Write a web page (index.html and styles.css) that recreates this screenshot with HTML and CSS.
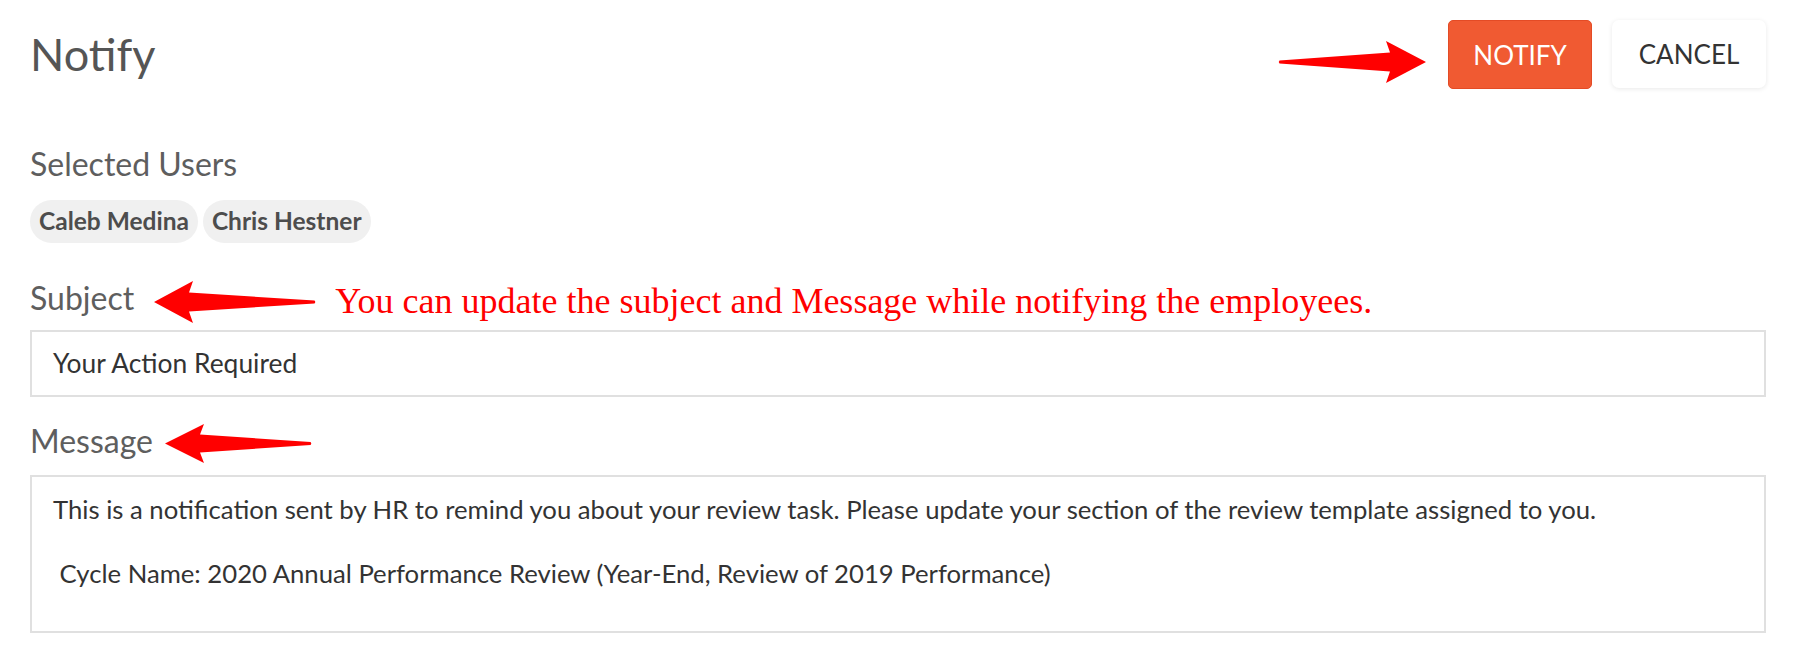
FILE: index.html
```html
<!DOCTYPE html>
<html lang="en">
<head>
<meta charset="utf-8">
<title>Notify</title>
<link rel="stylesheet" href="styles.css">
</head>
<body>
<div class="page">
  <header class="header">
    <h1 class="title">Notify</h1>
    <div class="spacer"></div>
    <svg class="arrow arrow-right" width="148" height="42" viewBox="0 0 148 42" aria-hidden="true">
      <path d="M148 21 L108 0 L112 11.5 L1.5 19.5 Q0 21 1.5 22.5 L112 30.5 L108 42 Z" fill="#ff0000"/>
    </svg>
    <button class="btn btn-primary">NOTIFY</button>
    <button class="btn btn-cancel">CANCEL</button>
  </header>

  <section class="users">
    <div class="label label-users">Selected Users</div>
    <div class="chips">
      <span class="chip">Caleb Medina</span>
      <span class="chip">Chris Hestner</span>
    </div>
  </section>

  <section class="field">
    <div class="label-row row-subject">
      <div class="label">Subject</div>
      <svg class="arrow arrow-subject" width="162" height="42" viewBox="0 0 162 42" aria-hidden="true">
        <path d="M0 21 L39 0 L35 11.5 L160.5 19.5 Q162 21 160.5 22.5 L35 30.5 L39 42 Z" fill="#ff0000"/>
      </svg>
      <div class="note">You can update the subject and Message while notifying the employees.</div>
    </div>
    <div class="input">Your Action Required</div>
  </section>

  <section class="field">
    <div class="label-row row-message">
      <div class="label">Message</div>
      <svg class="arrow arrow-message" width="147" height="39" viewBox="0 0 147 39" aria-hidden="true">
        <path d="M0 19.5 L39 0 L35 10.5 L145.5 18 Q147 19.5 145.5 21 L35 28.5 L39 39 Z" fill="#ff0000"/>
      </svg>
    </div>
    <div class="textarea">This is a notification sent by HR to remind you about your review task. Please update your section of the review template assigned to you.

 Cycle Name: 2020 Annual Performance Review (Year-End, Review of 2019 Performance)</div>
  </section>
</div>
</body>
</html>
```
FILE: styles.css
```css
html, body {
  margin: 0;
  padding: 0;
  background: #ffffff;
}

body {
  font-family: "Lato", "Open Sans", "Liberation Sans", sans-serif;
  color: #333333;
}

.page {
  padding: 20px 30px 0 30px;
}

.header {
  display: flex;
  align-items: center;
  height: 69px;
}

.title {
  margin: 0 0 2px 0;
  font-size: 45px;
  font-weight: 400;
  color: #555555;
  line-height: normal;
}

.spacer {
  flex: 1;
}

.arrow {
  display: block;
  flex: none;
}

.arrow-right {
  align-self: flex-start;
  margin-top: 21px;
  margin-right: 22px;
}

.btn {
  font-family: "Lato", "Open Sans", sans-serif;
  font-size: 26px;
  font-weight: 400;
  height: 69px;
  border-radius: 5px;
  cursor: pointer;
  box-sizing: border-box;
}

.btn-primary {
  width: 144px;
  background: #f05a32;
  border: 1px solid #e44b25;
  color: #ffffff;
}

.btn-cancel {
  width: 154px;
  height: 68px;
  align-self: flex-start;
  margin-left: 20px;
  background: #ffffff;
  border: none;
  color: #333333;
  border-radius: 7px;
  box-shadow: 0 1px 5px rgba(0, 0, 0, 0.09);
}

.label {
  font-size: 32px;
  font-weight: 400;
  color: #5e5e5e;
  line-height: normal;
}

.users {
  margin-top: 55px;
}

.chips {
  display: flex;
  gap: 5px;
  margin-top: 17px;
}

.chip {
  display: inline-block;
  background: #f0f0f0;
  border-radius: 22px;
  padding: 6px 9px 7px 9px;
  font-size: 24.5px;
  font-weight: 700;
  color: #4d4d4d;
  line-height: 30px;
}

.label-row {
  display: flex;
  align-items: flex-start;
}

.row-subject {
  margin-top: 35px;
  margin-bottom: 7px;
}

.arrow-subject {
  margin-top: 3px;
  margin-left: 20px;
}

.note {
  margin-top: 1.5px;
  margin-left: 19px;
  font-family: "Liberation Serif", "Times New Roman", serif;
  font-size: 36px;
  color: #ff0000;
  line-height: normal;
  white-space: nowrap;
}

.input {
  border: 2px solid #e0e0e0;
  padding: 16px 21px;
  font-size: 26.4px;
  line-height: 31px;
  color: #333333;
}

.row-message {
  margin-top: 24px;
  margin-bottom: 12px;
}

.arrow-message {
  margin-top: 3px;
  margin-left: 12px;
}

.textarea {
  box-sizing: border-box;
  height: 158px;
  border: 2px solid #e0e0e0;
  padding: 15.5px 21px;
  font-size: 25.7px;
  line-height: 32px;
  color: #333333;
  white-space: pre-wrap;
}
```
